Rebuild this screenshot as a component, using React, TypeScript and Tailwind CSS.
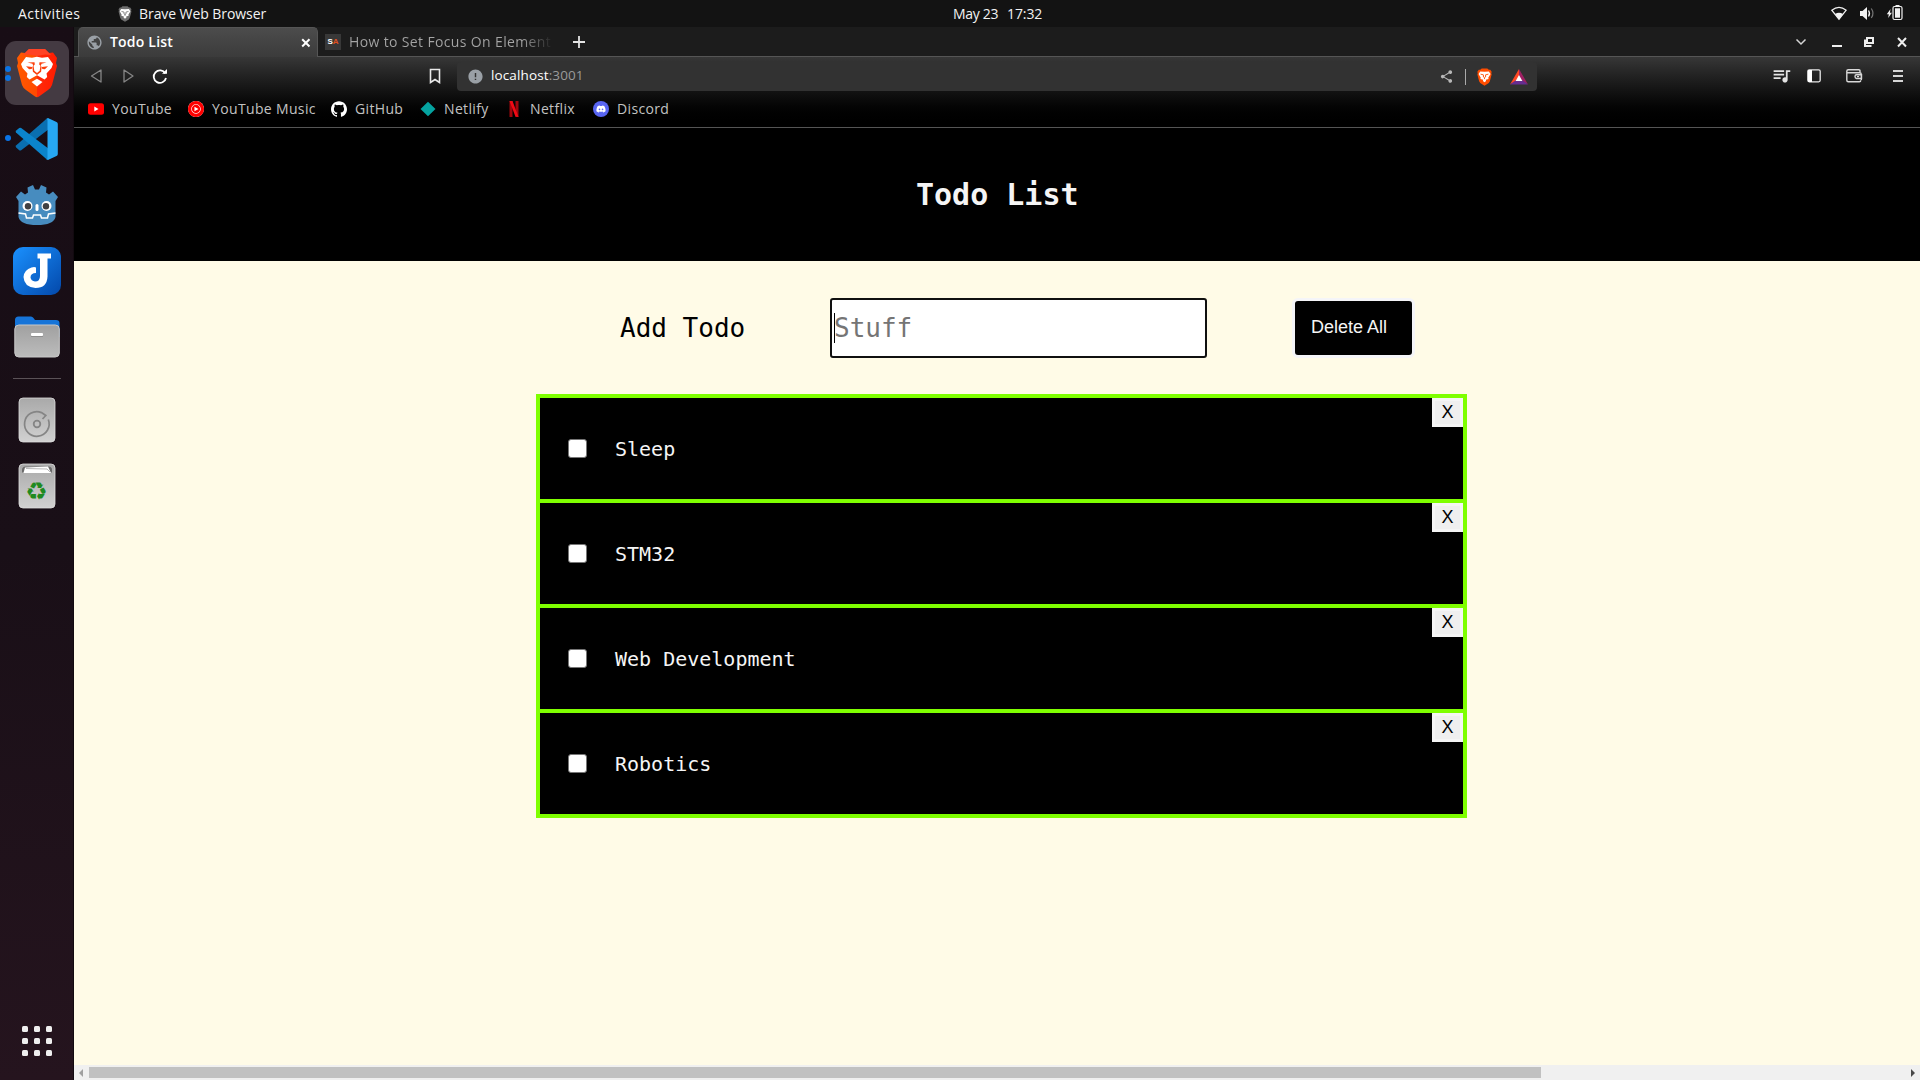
import React from "react";
import { SiGithub, SiYoutubemusic } from "react-icons/si";
import { MdQueueMusic, MdShare, MdPublic, MdError } from "react-icons/md";
import { FaDiscord } from "react-icons/fa";

const ui = "font-['Open_Sans','Noto_Sans',sans-serif]";
const mono = "font-['DejaVu_Sans_Mono',monospace]";
const arial = "font-['Liberation_Sans',Arial,sans-serif]";

function TopBar() {
  return (
    <header className={`flex h-[27px] shrink-0 items-center bg-[#131313] text-[14px] leading-none text-[#f2f2f2] ${ui}`}>
      <div className="ml-[18px] w-[100px] whitespace-nowrap tracking-[0.47px]">Activities</div>
      <svg width="14" height="16" viewBox="0 0 42 50">
        <path d="M13 1h16l4 4 4-.5L41 10l-1 5 1 3-5 19-3 5-12 7.500L9 42l-3-5L1 18l1-3L1 10l4-5.500 4 .5Z" fill="#6e6e6e" />
        <path d="M9 9.500l12 1 12-1 5 7-6.500 10.500 1 3.500-8 2.500 1 3-4.500 4-4.500-4 1-3-8-2.500 1-3.500L4.500 16.500Z" fill="#fff" />
        <path d="M10 17l8 2M32 17l-8 2M18 19v6l3 2 3-2v-6M21 27v4" fill="none" stroke="#6e6e6e" strokeWidth="2.500" />
      </svg>
      <div className="ml-[7px] w-[814px] whitespace-nowrap tracking-[-0.07px]">Brave Web Browser</div>
      <div className="w-[54px] whitespace-nowrap tracking-[-0.3px]">May 23</div>
      <div className="w-[824px] whitespace-nowrap tracking-[-0.1px]">17:32</div>
      <svg className="h-[27px] w-[84px]" viewBox="0 0 84 27">
        <path d="M.8 10.200Q8 4.600 15.200 10.200L8 19.200Z" fill="none" stroke="#f2f2f2" strokeWidth="1.200" />
        <path d="M4 14Q8 11.500 12 14L8 19.500Z" fill="#f2f2f2" />
        <path d="M29 11h2.500L36 7v13l-4.500-4H29Z" fill="#f2f2f2" />
        <path d="M37.500 10.500q2 3 0 6" stroke="#f2f2f2" strokeWidth="1.300" fill="none" />
        <path d="M40.300 8.500q3.400 5 0 9.500" stroke="#777" strokeWidth="1.200" fill="none" />
        <path d="M59.500 9l-3.700 5.200h2L57.200 18l3.700-5.300h-2Z" fill="#f2f2f2" />
        <rect x="62" y="6.500" width="9" height="13" rx="1.500" fill="none" stroke="#f2f2f2" strokeWidth="1.200" />
        <rect x="64" y="8.300" width="5" height="9.400" fill="#f2f2f2" />
        <rect x="64.500" y="5" width="4" height="1.500" fill="#f2f2f2" />
      </svg>
    </header>
  );
}

function BraveIcon() {
  return (
    <svg width="42" height="50" viewBox="0 0 42 50">
      <defs>
        <linearGradient id="lion" x1="0" x2="1">
          <stop offset="0" stopColor="#ff5a00" />
          <stop offset=".49" stopColor="#ff4a00" />
          <stop offset=".5" stopColor="#ff2a0a" />
          <stop offset="1" stopColor="#ff1c00" />
        </linearGradient>
      </defs>
      <path d="M13 1h16l4 4 4-.5L41 10l-1 5 1 3-5 19q-1 3-4 5l-9 6.500q-2 1.300-4 0L10 42q-3-2-4-5L1 18l1-3L1 10l4-5.500 4 .5Z" fill="url(#lion)" />
      <path d="M13 1h16l4 4 2 2-6-.5-8 1.500-8-1.500L7 7l2-2Z" fill="#ff4326" />
      <path d="M10 9l6 .8 5-1 5 1 6-.8 5 7-1.500 4-5 5.500.7 3.500-2.700 2.500L21 27.300 13.500 31.500l-2.700-2.500.7-3.500-5-5.500L5 16Z" fill="#fff" />
      <path d="M15.500 34l5.500-3.300L26.500 34 21 38.500Z" fill="#fff" />
      <path d="M11.500 14.600l7-.4.300 2.300-1.300 1.300.8 5 2.700 2.200 2.700-2.200.8-5-1.300-1.300.300-2.300 7 .4-5 1.200-.6 1.700.7 1.700-.5 4.500-4.100 3.300-4.100-3.300-.5-4.500.7-1.700-.6-1.700Z" fill="#fb3f0c" />
      <path d="M10 18.200l6.200.8-.5 1.900-2.600.3ZM32 18.200l-6.200.8.5 1.900 2.600.3Z" fill="#fb3f0c" />
    </svg>
  );
}

function CodeIcon() {
  return (
    <svg width="44" height="44" viewBox="0 0 44 44">
      <path d="M1 28.500q-.8 1 .2 2l3 2.700q1 .6 2 0L34 12V1.500Q32.500 1 31 2.200Z" fill="#0a6fb0" />
      <path d="M1 15.500q-.8-1 .2-2L4.200 11q1-.6 2 0L34 32v10.500q-1.500.5-3-.7Z" fill="#0b84cc" />
      <path d="M31 42q1.500 1.200 3.500.3l7-3.300q1.300-.7 1.300-2V7q0-1.300-1.300-2l-7-3.300Q32.600.8 31 2.200q1.500-.6 1.500 1.300v37q0 1.800-1.500 1.500Z" fill="#27a8f3" />
    </svg>
  );
}

function GodotIcon() {
  return (
    <svg width="44" height="42" viewBox="0 0 44 42">
      <path d="M12.500 3.500L18 1l2 4.500h4L26 1l5.500 2.500-.5 5 3 2 4-3 5 5.500-2.500 4V33q-2 8-18.500 8T3.500 33V17L1 13l5-5.500 4 3 3-2Z" fill="#478cbf" />
      <path d="M3.500 29l7 1 1 4h6l1-3h7l1 3h6l1-4 7-1" fill="none" stroke="#fff" strokeWidth="1.500" />
      <circle cx="12.500" cy="22" r="5" fill="#fff" /><circle cx="31.500" cy="22" r="5" fill="#fff" />
      <circle cx="13" cy="22.300" r="3.200" fill="#414042" /><circle cx="31" cy="22.300" r="3.200" fill="#414042" />
      <rect x="20.500" y="20" width="3" height="7" rx="1.500" fill="#fff" />
    </svg>
  );
}

function JoplinIcon() {
  return (
    <svg width="48" height="48" viewBox="0 0 48 48">
      <defs><linearGradient id="jop" x1="0" y1="0" x2="1" y2="1"><stop offset="0" stopColor="#1a91ff" /><stop offset="1" stopColor="#0348aa" /></linearGradient></defs>
      <rect width="48" height="48" rx="10" fill="url(#jop)" />
      <path d="M24.500 6.500H38v5h-3.500V29.500Q34 41 22.500 41 11 40 10.500 30q.5-7 8-9.500 3-.8 4.500 0v5.500q-5.500 0-5.500 4.500 .5 3.500 4.500 4 5 0 5-5.500V11.500H24.500Z" fill="#fff" />
    </svg>
  );
}

function FilesIcon() {
  return (
    <svg width="46" height="42" viewBox="0 0 46 42">
      <defs><linearGradient id="grey" x1="0" y1="0" x2="0" y2="1"><stop offset="0" stopColor="#a0a0a0" /><stop offset="1" stopColor="#bcbcbc" /></linearGradient></defs>
      <path d="M1 4q0-3.500 3.500-3.500H17q1.500 0 2.500 1.500L21 4h21q3.500 0 3.500 3v14H1Z" fill="#1674d8" />
      <rect x=".8" y="9" width="44.500" height="32" rx="4" fill="url(#grey)" stroke="#c8c8c8" strokeWidth="1" />
      <rect x="17" y="17" width="12" height="3" rx="1" fill="#fff" /><path d="M17 20.500h12" stroke="#888" strokeWidth=".8" />
    </svg>
  );
}

function DiskIcon() {
  return (
    <svg width="38" height="46" viewBox="0 0 38 46">
      <defs><linearGradient id="disk" x1="0" y1="0" x2="0" y2="1"><stop offset="0" stopColor="#a9a9a9" /><stop offset="1" stopColor="#d1d1d1" /></linearGradient></defs>
      <rect x="1" y="1" width="36" height="44" rx="4" fill="url(#disk)" stroke="#ddd" strokeWidth=".8" />
      <path d="M30.300 22.500A12.300 12.300 0 1 1 23.500 15.600L27.800 18.500 24.500 22" fill="none" stroke="#858585" strokeWidth="1.700" />
      <circle cx="19" cy="27" r="3.300" fill="none" stroke="#858585" strokeWidth="1.800" />
    </svg>
  );
}

function TrashIcon() {
  return (
    <div className="relative h-[46px] w-[38px]">
      <svg width="38" height="46" viewBox="0 0 38 46">
        <rect x="1" y="1" width="36" height="44" rx="4" fill="url(#disk)" stroke="#ddd" strokeWidth=".8" />
        <path d="M4 9.500V7q0-3.500 3.500-3.500h23Q34 3.500 34 7v2.500Z" fill="#6b6b6b" />
        <path d="M5.500 10l1.500-5.500 23-1 3 6.500Z" fill="#fff" />
        <path d="M8 5.500l21 .5 3 3" fill="none" stroke="#999" strokeWidth=".7" />
      </svg>
      <span className="absolute left-0 top-[18px] w-[38px] text-center font-['DejaVu_Sans',sans-serif] text-[25px] leading-[22px] text-[#1f8a1f]">♻</span>
    </div>
  );
}

function Dock() {
  return (
    <aside className="flex w-[74px] shrink-0 flex-col items-center border-r border-[#120a10] bg-linear-to-b from-[#180d15] via-[#190f17] to-[#25141e]">
      <div className="relative mt-[14px] flex h-[64px] w-[64px] items-center justify-center rounded-[11px] bg-[#443a42]">
        <BraveIcon />
        <div className="absolute left-0 top-[25px] flex flex-col gap-[3px]">
          <i className="h-[6px] w-[6px] rounded-full bg-[#0a74e6]" />
          <i className="h-[6px] w-[6px] rounded-full bg-[#0a74e6]" />
        </div>
      </div>
      <div className="relative mt-[12px] flex h-[44px] w-[64px] items-center justify-center">
        <CodeIcon />
        <i className="absolute left-0 top-[18px] h-[6px] w-[6px] rounded-full bg-[#0a74e6]" />
      </div>
      <div className="mt-[23px] h-[42px]"><GodotIcon /></div>
      <div className="mt-[21px] h-[48px]"><JoplinIcon /></div>
      <div className="mt-[21px] h-[42px]"><FilesIcon /></div>
      <div className="mt-[20px] h-px w-[48px] bg-[#5a5257]" />
      <div className="mt-[18px] h-[46px]"><DiskIcon /></div>
      <div className="mt-[20px] h-[46px]"><TrashIcon /></div>
      <div className="mb-[24px] mt-auto grid grid-cols-3 gap-[6px]">
        {Array.from({ length: 9 }, (_, i) => <i key={i} className="h-[6px] w-[6px] rounded-[1.5px] bg-[#efefef]" />)}
      </div>
    </aside>
  );
}

function TabStrip() {
  return (
    <div className={`flex h-[30px] shrink-0 bg-[#1c1c1c] text-[14px] leading-none ${ui}`}>
      <div className="w-[4px] border-b border-[#555]" />
      <div className="flex w-[240px] items-center rounded-t-[5px] border-x border-t border-[#555] bg-linear-to-b from-[#4c4c4c] to-[#3b3b3b]">
        <MdPublic className="ml-[7px] h-[17px] w-[17px] text-[#9aa0a6]" />
        <div className="ml-[7px] w-[191px] whitespace-nowrap pb-px text-[14px] font-semibold tracking-[0.2px] text-white">Todo List</div>
        <svg width="10" height="10" viewBox="0 0 10 10"><path d="M1.200 1.200l7.300 7.300M8.500 1.200l-7.300 7.300" stroke="#fff" strokeWidth="2" /></svg>
      </div>
      <div className="flex grow items-center border-b border-[#555]">
        <div className={`ml-[7px] flex h-[16px] w-[16px] items-center justify-center bg-[#383838] text-[8px] font-bold text-white ${arial}`}>S<span className="text-[#e0501f]">A</span></div>
        <div className="ml-[8px] w-[203px] overflow-hidden whitespace-nowrap bg-linear-to-r from-[#a5a5a5] from-85% to-[#222] bg-clip-text py-1 tracking-[0.36px] text-transparent">How to Set Focus On Element</div>
        <svg className="ml-[20px]" width="14" height="14" viewBox="0 0 14 14"><path d="M7 1v12M1 7h12" stroke="#e4e4e4" strokeWidth="1.800" /></svg>
        <svg className="ml-auto" width="132" height="30" viewBox="0 0 132 30">
          <path d="M8.500 12.500l4.500 4.500 4.500-4.500" fill="none" stroke="#d5d5d5" strokeWidth="1.500" />
          <path d="M44 19h10" stroke="#eee" strokeWidth="2" />
          <path d="M79 11h6v5h-6z" fill="none" stroke="#eee" strokeWidth="2" />
          <path d="M77 12.500V19h6.500" fill="none" stroke="#eee" strokeWidth="2" />
          <path d="M110 11l8 8.500M118 11l-8 8.500" stroke="#eee" strokeWidth="2" />
        </svg>
      </div>
    </div>
  );
}

const bookmarks = [
  { name: "YouTube", w: "w-[76px]" },
  { name: "YouTube Music", w: "w-[119px]" },
  { name: "GitHub", w: "w-[65px]" },
  { name: "Netlify", w: "w-[62px]" },
  { name: "Netflix", w: "w-[63px]" },
  { name: "Discord", w: "w-[70px]" },
];

function BookmarkIcon({ name }: { name: string }) {
  if (name === "YouTube") return <svg width="16" height="16" viewBox="0 0 16 16"><rect y="2.300" width="16" height="11.400" rx="2.500" fill="#f00" /><path d="M6.300 5.600v4.800l4.200-2.400Z" fill="#fff" /></svg>;
  if (name === "YouTube Music") return <div className="rounded-full bg-white"><SiYoutubemusic className="h-4 w-4 text-[#f00]" /></div>;
  if (name === "GitHub") return <SiGithub className="h-4 w-4 text-white" />;
  if (name === "Netlify") return <svg width="16" height="16" viewBox="0 0 16 16"><path d="M8 .8L15.500 8 8 15.200.500 8Z" fill="#05a3a0" /></svg>;
  if (name === "Netflix") return <svg width="16" height="16" viewBox="0 0 16 16"><path d="M3.500 0H6.500V16l-3 .3ZM9.500 0h3v16l-3-.5Z" fill="#a1060d" /><path d="M3.500 0h3l6 16-3-.3Z" fill="#f10a15" /></svg>;
  return <div className="flex h-4 w-4 items-center justify-center rounded-full bg-[#5865f2]"><FaDiscord className="h-[10px] w-[10px] text-white" /></div>;
}

function Toolbar() {
  return (
    <div className={`flex h-[71px] shrink-0 flex-col border-b border-[#555] bg-linear-to-b from-[#373737] from-0% via-[#080808] via-65% to-black ${ui}`}>
      <div className="flex h-[34px] items-start">
        <svg className="mt-[9px]" width="120" height="20" viewBox="0 0 120 20">
          <path d="M27 4v12L17.500 10ZM50 4v12l9-6Z" fill="none" stroke="#868686" strokeWidth="1.300" strokeLinejoin="round" />
          <path d="M91.300 7.500A6.200 6.200 0 1 0 92 12" fill="none" stroke="#fff" strokeWidth="1.800" />
          <path d="M88 7.800h5V3Z" fill="#fff" />
        </svg>
        <svg className="ml-[235px] mt-[11px]" width="12" height="16" viewBox="0 0 12 16"><path d="M1.500 1.500h9v13L6 11.500l-4.500 3Z" fill="none" stroke="#e8e8e8" strokeWidth="1.600" /></svg>
        <div className="ml-[16px] mt-[5px] flex h-[29px] w-[1080px] items-center rounded-[4px] bg-[#323232] text-[13.500px] leading-none">
          <MdError className="ml-[10px] h-[17px] w-[17px] text-[#9aa0a6]" />
          <div className="ml-[7px] w-[948px] whitespace-nowrap pb-px tracking-[0.12px] text-white">localhost<span className="text-[#9a9a9a]">:3001</span></div>
          <MdShare className="h-[15px] w-[15px] text-[#b8b8b8]" />
          <div className="ml-[11px] h-[16px] w-px bg-[#aaa]" />
          <svg className="ml-[11px]" width="15" height="18" viewBox="0 0 42 50">
            <path d="M13 1h16l4 4 4-.5L41 10l-1 5 1 3-5 19-3 5-12 7.500L9 42l-3-5L1 18l1-3L1 10l4-5.500 4 .5Z" fill="#ff4d00" />
            <path d="M9 9.500l12 1 12-1 5 7-6.500 10.500 1 3.500-8 2.500 1 3-4.500 4-4.500-4 1-3-8-2.500 1-3.500L4.500 16.500Z" fill="#fff" />
            <path d="M10 17l8 2M32 17l-8 2M18 19v6l3 2 3-2v-6M21 27v4" fill="none" stroke="#ff4d00" strokeWidth="2.500" />
          </svg>
          <svg className="ml-[18px]" width="18" height="16" viewBox="0 0 18 16">
            <path d="M9 0L0 15.500 9 10Z" fill="#ff4724" /><path d="M9 0l9 15.500L9 10Z" fill="#9e1f63" /><path d="M0 15.500h18L9 9Z" fill="#662d91" /><path d="M9 6l3.400 6H5.600Z" fill="#fff" />
          </svg>
        </div>
        <MdQueueMusic className="ml-[234px] mt-[8px] h-[21px] w-[21px] text-[#e4e4e4]" />
        <svg className="ml-[15px] mt-[12px]" width="14" height="14" viewBox="0 0 14 14"><rect x=".8" y=".8" width="12.400" height="12" rx="1.500" fill="none" stroke="#e8e8e8" strokeWidth="1.300" /><rect x="1" y="1" width="4" height="12" fill="#fff" /></svg>
        <svg className="ml-[25px] mt-[12px]" width="17" height="14" viewBox="0 0 17 14"><path d="M14 4V2q0-1.200-1.200-1.200H2.300Q.8.800.8 2.300v9q0 1.500 1.500 1.500h11q1.500 0 1.500-1.500M1 3.800h12.500q1.800 0 1.800 1.500V11M15.500 5.800h-5q-1.500 0-1.500 1.700t1.500 2h5Z" fill="none" stroke="#d8d8d8" strokeWidth="1.400" /><path d="M11 7.700h2" stroke="#ddd" strokeWidth="1.200" /></svg>
        <div className="ml-[30px] mt-[13px] flex flex-col gap-[3px]"><i className="h-[2px] w-[10px] bg-[#d5d5d5]" /><i className="h-[2px] w-[10px] bg-[#d5d5d5]" /><i className="h-[2px] w-[10px] bg-[#d5d5d5]" /></div>
      </div>
      <div className="flex h-[36px] items-center pl-[14px] text-[14px] leading-none tracking-[0.35px] text-[#c2c2c2]">
        {bookmarks.map((b) => (
          <div key={b.name} className="flex items-center">
            <BookmarkIcon name={b.name} />
            <div className={`ml-[8px] whitespace-nowrap ${b.w}`}>{b.name}</div>
          </div>
        ))}
      </div>
    </div>
  );
}

const todos = ["Sleep", "STM32", "Web Development", "Robotics"];

function Page() {
  return (
    <main className="flex grow flex-col bg-[#fffbe7]">
      <div className={`flex h-[133px] items-center bg-black pl-[842px] text-[30px] font-bold text-[#f5f5f5] ${mono}`}>
        <h1>Todo List</h1>
      </div>
      <div className="mt-[37px] flex h-[60px] items-center pl-[546px]">
        <div className={`w-[210px] text-[26px] ${mono}`}>Add Todo</div>
        <div className={`flex h-[60px] w-[377px] items-center rounded-[3px] border-2 border-[#101010] bg-white pl-[2px] text-[26px] text-[#757575] ${mono}`}>
          <div className="h-[30px] w-px bg-black" /><span className="-ml-px">Stuff</span>
        </div>
        <div className={`ml-[85px] flex h-[60px] w-[123px] items-center rounded-[6px] border-3 border-[#f5f5f8] bg-black pb-[2px] pl-[16px] text-[18px] leading-none text-[#f5f5f5] ${arial}`}>Delete All</div>
      </div>
      <div className="ml-[462px] mt-[36px] w-[931px] border-4 border-b-0 border-[#7fff00]">
        {todos.map((t) => (
          <div key={t} className="flex h-[105px] border-b-4 border-[#7fff00] bg-black">
            <div className="ml-[28px] mt-[41px] h-[19px] w-[19px] rounded-[3px] border border-[#767676] bg-white" />
            <div className={`ml-[28px] mt-[37px] text-[20px] leading-[28px] text-[#f5f5f5] ${mono}`}>{t}</div>
            <div className={`ml-auto flex h-[29px] w-[31px] items-center justify-center border-3 border-[#f5f5f5] bg-[#efefef] pb-[2px] text-[18px] leading-none text-black ${arial}`}>X</div>
          </div>
        ))}
      </div>
      <div className="mt-auto flex h-[15px] items-center bg-[#f0f0f0]">
        <svg className="ml-[4px]" width="6" height="8" viewBox="0 0 6 8"><path d="M5 0v8L1 4Z" fill="#a0a0a0" /></svg>
        <div className="ml-[5px] h-[11px] w-[1452px] bg-[#c1c1c1]" />
        <svg className="ml-auto mr-[4px]" width="5" height="8" viewBox="0 0 5 8"><path d="M0 0v8l4-4Z" fill="#4a4a4a" /></svg>
      </div>
    </main>
  );
}

export default function App() {
  return (
    <div className="flex h-[1080px] w-[1920px] flex-col overflow-hidden">
      <TopBar />
      <div className="flex min-h-0 grow">
        <Dock />
        <div className="flex w-[1846px] flex-col">
          <TabStrip />
          <Toolbar />
          <Page />
        </div>
      </div>
    </div>
  );
}
